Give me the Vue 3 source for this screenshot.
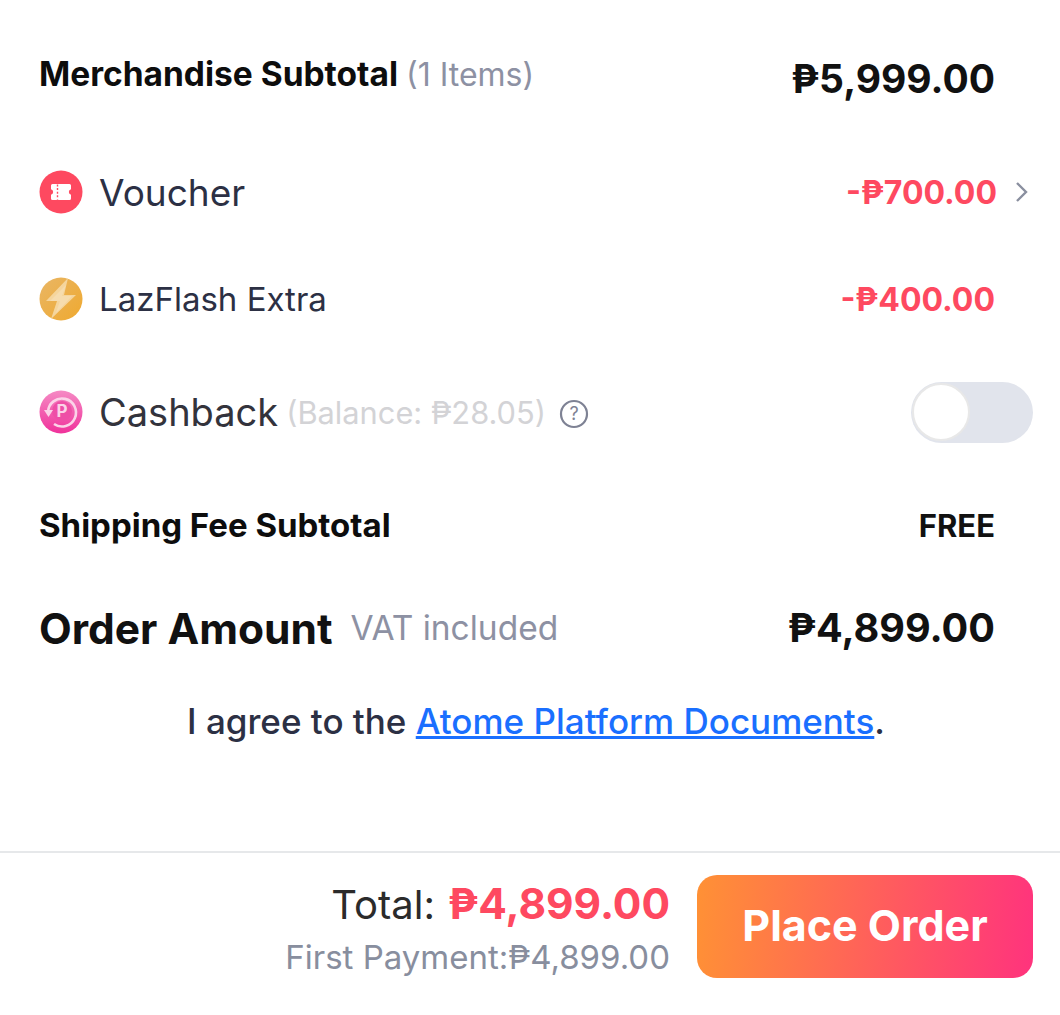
<template>
  <div class="page">
    <div class="summary">
      <div class="row row-merch">
        <div class="label-bold">Merchandise Subtotal <span class="items">(1 Items)</span></div>
        <div class="merch-price">₱5,999.00</div>
      </div>

      <div class="row row-voucher">
        <div class="left">
          <svg class="icon" viewBox="0 0 44 44">
            <circle cx="22" cy="22" r="21.5" fill="#fe4960" />
            <path d="M12 15.500a1.500 1.500 0 0 1 1.500-1.500h17a1.500 1.500 0 0 1 1.500 1.500v3.700a2.900 2.900 0 0 0 0 5.600v3.700a1.500 1.500 0 0 1-1.500 1.500h-17a1.500 1.500 0 0 1-1.500-1.500v-3.700a2.900 2.900 0 0 0 0-5.600z" fill="#fff" />
            <path d="M18.500 14.500v15" stroke="#fe4960" stroke-width="1.400" stroke-dasharray="2 1.600" />
          </svg>
          <span class="name name-voucher">Voucher</span>
        </div>
        <div class="right">
          <span class="discount">-₱700.00</span>
          <svg class="chevron" viewBox="0 0 14 20">
            <path d="M2 1l9 9-9 9" fill="none" stroke="#8a8f9f" stroke-width="2.400" />
          </svg>
        </div>
      </div>

      <div class="row row-flash">
        <div class="left">
          <svg class="icon" viewBox="0 0 44 44">
            <defs>
              <linearGradient id="flashBg" x1="0" y1="0" x2="1" y2="1">
                <stop offset="0" stop-color="#e9b665" />
                <stop offset="1" stop-color="#efa92f" />
              </linearGradient>
            </defs>
            <circle cx="22" cy="22" r="21.500" fill="url(#flashBg)" />
            <path d="M29 1L7 24h11L12 42l25-24H25z" fill="#f5d59c" />
            <path d="M27 8L11 24h10l-4 12 16-17H23z" fill="#f6dcae" />
          </svg>
          <span class="name">LazFlash Extra</span>
        </div>
        <div class="right">
          <span class="discount">-₱400.00</span>
        </div>
      </div>

      <div class="row row-cash">
        <div class="left">
          <svg class="icon" viewBox="0 0 44 44">
            <defs>
              <linearGradient id="cashBg" x1="0" y1="0" x2="0" y2="1">
                <stop offset="0" stop-color="#f58ac4" />
                <stop offset="1" stop-color="#f0329b" />
              </linearGradient>
            </defs>
            <circle cx="22" cy="22" r="21.500" fill="url(#cashBg)" />
            <circle cx="23" cy="21" r="10" fill="#ee4fa6" />
            <path d="M9 22a14 14 0 1 1 6 12" fill="none" stroke="#fbd3e8" stroke-width="2.600" />
            <path d="M5 20h9l-4.500 7z" fill="#fbd3e8" />
            <text x="23" y="27" class="cash-p">P</text>
          </svg>
          <span class="name name-cash">Cashback</span>
          <span class="balance">(Balance: ₱28.05)</span>
          <svg class="help" viewBox="0 0 30 30">
            <circle cx="15" cy="15" r="13" fill="none" stroke="#7e8294" stroke-width="2.200" />
            <text x="15" y="21" class="help-mark">?</text>
          </svg>
        </div>
        <div class="toggle"><div class="knob"></div></div>
      </div>

      <div class="row row-ship">
        <div class="label-bold">Shipping Fee Subtotal</div>
        <div class="free">FREE</div>
      </div>

      <div class="row row-order">
        <div class="order-left">
          <span class="order-title">Order Amount</span>
          <span class="vat">VAT included</span>
        </div>
        <div class="order-price">₱4,899.00</div>
      </div>

      <p class="agree">I agree to the <a href="#" class="doc-link">Atome Platform Documents</a>.</p>
    </div>

    <div class="footer">
      <div class="totals">
        <div class="total-line">
          <span class="total-label">Total:</span>
          <span class="total-price">₱4,899.00</span>
        </div>
        <div class="first-pay">First Payment:₱4,899.00</div>
      </div>
      <button class="place-btn">Place Order</button>
    </div>
  </div>
</template>

<script setup>
</script>

<style>
body {
  background: #fff;
}
</style>

<style scoped>
.page {
  width: 1060px;
  height: 1015px;
  display: flex;
  flex-direction: column;
  font-family: "Inter", "Noto Sans", "DejaVu Sans", sans-serif;
  color: #111;
  background: #fff;
}

.summary {
  height: 853px;
  padding: 0 27px 0 39px;
  box-sizing: border-box;
  border-bottom: 2px solid #e6e8ea;
}

.row {
  display: flex;
  align-items: center;
  justify-content: space-between;
}

.row-merch {
  height: 150px;
  padding-right: 38px;
}

.row-voucher {
  height: 84px;
}

.row-flash {
  height: 130px;
  padding-right: 38px;
}

.row-cash {
  height: 96px;
}

.row-ship {
  height: 130px;
  padding-right: 38px;
}

.row-order {
  height: 76px;
  padding-right: 38px;
}

.left {
  display: flex;
  align-items: center;
}

.right {
  display: flex;
  align-items: center;
}

.icon {
  width: 44px;
  height: 44px;
  margin-right: 16px;
  flex-shrink: 0;
}

.label-bold {
  font-size: 33px;
  font-weight: 700;
  color: #0d0d0d;
}

.row-merch .label-bold {
  font-size: 33.500px;
  margin-top: -2px;
}

.items {
  font-size: 32px;
  font-weight: 400;
  color: #8d91a3;
}

.merch-price {
  font-size: 39px;
  font-weight: 700;
  margin-top: 6px;
}

.name {
  font-size: 33px;
  color: #2c3044;
}

.name-voucher {
  font-size: 37px;
}

.name-cash {
  font-size: 38px;
  color: #33333c;
}

.discount {
  font-size: 32px;
  font-weight: 700;
  color: #fe4960;
}

.chevron {
  width: 14px;
  height: 20px;
  margin-left: 18px;
  margin-right: 4px;
}

.balance {
  font-size: 30.800px;
  color: #d3d3d6;
  margin-left: 8px;
}

.help {
  width: 30px;
  height: 30px;
  margin-left: 13px;
  margin-top: 3px;
}

.help-mark {
  font-size: 18px;
  text-anchor: middle;
  fill: #7e8294;
}

.cash-p {
  font-size: 17px;
  font-weight: 700;
  text-anchor: middle;
  fill: #fbd3e8;
}

.toggle {
  width: 122px;
  height: 61px;
  border-radius: 31px;
  background: #e1e4ec;
  display: flex;
  align-items: center;
  padding-left: 1px;
  box-sizing: border-box;
}

.knob {
  width: 58px;
  height: 58px;
  border-radius: 50%;
  background: #fff;
  border: 2px solid #e8e8e8;
  box-sizing: border-box;
}

.free {
  font-size: 31px;
  font-weight: 700;
}

.order-left {
  display: flex;
  align-items: center;
}

.order-title {
  font-size: 42.500px;
  font-weight: 700;
}

.vat {
  font-size: 33.500px;
  color: #8d91a3;
  margin-left: 18px;
}

.order-price {
  font-size: 39.600px;
  font-weight: 700;
}

.agree {
  margin: 0;
  height: 112px;
  padding-top: 34px;
  box-sizing: border-box;
  text-align: center;
  font-size: 35px;
  font-weight: 500;
  color: #2c3044;
}

.doc-link {
  color: #1a6fff;
  text-decoration: underline;
}

.footer {
  flex: 1;
  display: flex;
  align-items: flex-start;
  justify-content: flex-end;
  padding: 22px 27px 0 0;
}

.totals {
  display: flex;
  flex-direction: column;
  align-items: flex-end;
  margin-right: 27px;
}

.total-line {
  display: flex;
  align-items: baseline;
  height: 59px;
  padding-top: 3px;
}

.total-label {
  font-size: 40px;
  color: #2b2b2b;
}

.total-price {
  font-size: 42.400px;
  font-weight: 700;
  color: #fe4960;
  margin-left: 13px;
}

.first-pay {
  font-size: 33px;
  color: #888e9e;
}

.place-btn {
  width: 336px;
  height: 103px;
  border: 0;
  border-radius: 20px;
  background: linear-gradient(95deg, #ff9135, #ff337d);
  color: #fff;
  font-family: inherit;
  font-size: 43px;
  font-weight: 700;
  padding-bottom: 4px;
}
</style>
